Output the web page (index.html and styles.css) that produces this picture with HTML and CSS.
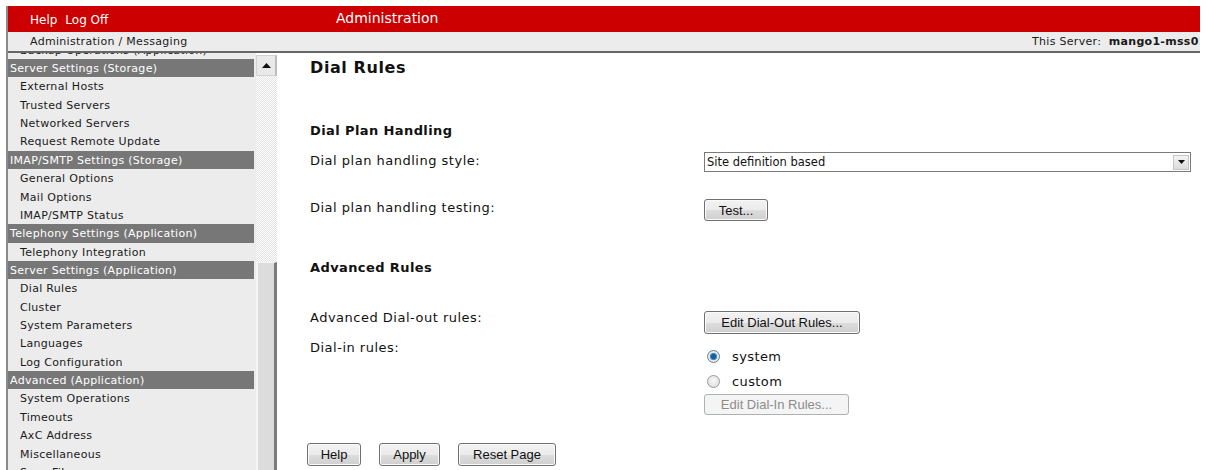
FILE: index.html
```html
<!DOCTYPE html>
<html lang="en">
<head>
<meta charset="utf-8">
<title>Administration - Dial Rules</title>
<link rel="stylesheet" href="styles.css">
</head>
<body>
<div class="frame">
  <header class="topbar">
    <nav class="toplinks"><a href="#">Help</a><a href="#">Log Off</a></nav>
    <div class="apptitle">Administration</div>
  </header>
  <div class="crumbbar">
    <span class="crumbs">Administration / Messaging</span>
    <span class="server">This Server:&nbsp; <b>mango1-mss01.corp.local</b></span>
  </div>
  <div class="body">
    <aside class="sidebar">
      <div class="navlist">
        <div class="nav-item">Backup Operations (Application)</div>
        <div class="nav-head">Server Settings (Storage)</div>
        <div class="nav-item">External Hosts</div>
        <div class="nav-item">Trusted Servers</div>
        <div class="nav-item">Networked Servers</div>
        <div class="nav-item">Request Remote Update</div>
        <div class="nav-head">IMAP/SMTP Settings (Storage)</div>
        <div class="nav-item">General Options</div>
        <div class="nav-item">Mail Options</div>
        <div class="nav-item">IMAP/SMTP Status</div>
        <div class="nav-head">Telephony Settings (Application)</div>
        <div class="nav-item">Telephony Integration</div>
        <div class="nav-head">Server Settings (Application)</div>
        <div class="nav-item">Dial Rules</div>
        <div class="nav-item">Cluster</div>
        <div class="nav-item">System Parameters</div>
        <div class="nav-item">Languages</div>
        <div class="nav-item">Log Configuration</div>
        <div class="nav-head">Advanced (Application)</div>
        <div class="nav-item">System Operations</div>
        <div class="nav-item">Timeouts</div>
        <div class="nav-item">AxC Address</div>
        <div class="nav-item">Miscellaneous</div>
        <div class="nav-item">Save Files</div>
      </div>
    </aside>
    <div class="scrollbar">
      <div class="sb-up">
        <svg width="9" height="5" viewBox="0 0 9 5"><path d="M0 5 L4.5 0 L9 5 Z" fill="#111"/></svg>
      </div>
      <div class="sb-track"></div>
      <div class="sb-thumb"></div>
    </div>
    <main class="content">
      <h1 class="page-title">Dial Rules</h1>

      <h2 class="section first">Dial Plan Handling</h2>
      <div class="form-row">
        <div class="form-label">Dial plan handling style:</div>
        <div class="select">
          <span class="select-value">Site definition based</span>
          <span class="select-arrow">
            <svg width="7" height="4" viewBox="0 0 7 4"><path d="M0 0 L7 0 L3.5 4 Z" fill="#111"/></svg>
          </span>
        </div>
      </div>
      <div class="form-row gap-test">
        <div class="form-label">Dial plan handling testing:</div>
        <button class="btn btn-test" type="button">Test...</button>
      </div>

      <h2 class="section second">Advanced Rules</h2>
      <div class="form-row">
        <div class="form-label">Advanced Dial-out rules:</div>
        <button class="btn btn-out" type="button">Edit Dial-Out Rules...</button>
      </div>
      <div class="form-row gap-in">
        <div class="form-label">Dial-in rules:</div>
        <div class="radio-group">
          <label class="radio"><span class="radio-dot checked"></span>system</label>
          <label class="radio"><span class="radio-dot"></span>custom</label>
          <button class="btn btn-in" type="button" disabled>Edit Dial-In Rules...</button>
        </div>
      </div>

      <div class="actions">
        <button class="btn btn-help" type="button">Help</button>
        <button class="btn btn-apply" type="button">Apply</button>
        <button class="btn btn-reset" type="button">Reset Page</button>
      </div>
    </main>
  </div>
</div>
</body>
</html>
```
FILE: styles.css
```css
html, body {
  margin: 0;
  padding: 0;
  background: #fff;
}

body {
  font-family: "DejaVu Sans", sans-serif;
  color: #111;
}

.frame {
  margin: 6px 6px 0 6px;
  border-left: 2px solid #8a8a8a;
  height: 464px;
  overflow: hidden;
}

/* red application bar */
.topbar {
  height: 26px;
  background: #cc0000;
  color: #fff;
  display: flex;
  align-items: center;
  padding-left: 22px;
}

.toplinks {
  width: 306px;
  display: flex;
  gap: 8px;
  font-size: 12px;
  padding-top: 2px;
}

.toplinks a {
  color: #fff;
  text-decoration: none;
}

.apptitle {
  font-size: 14px;
  padding-bottom: 2px;
}

/* breadcrumb strip */
.crumbbar {
  height: 19px;
  background: #ececec;
  border-bottom: 2px solid #666;
  display: flex;
  align-items: center;
  padding-left: 22px;
  font-size: 11px;
  letter-spacing: 0.3px;
  color: #1a1a1a;
}

.crumbs {
  flex: 1;
}

.server {
  width: 168px;
  white-space: nowrap;
  overflow: hidden;
}

.server b {
  font-weight: bold;
}

.body {
  display: flex;
  height: 417px;
}

/* navigation tree */
.sidebar {
  width: 248px;
  background: #ececec;
  overflow: hidden;
  flex-shrink: 0;
}

.navlist {
  margin-top: -12.36px;
}

.nav-head,
.nav-item {
  height: 18.36px;
  box-sizing: border-box;
  padding-top: 1px;
  line-height: 18px;
  font-size: 11px;
  letter-spacing: 0.3px;
  white-space: nowrap;
}

.nav-head {
  background: #777;
  color: #fff;
  padding-left: 2px;
  margin-right: 2px;
}

.nav-item {
  padding-left: 12px;
  color: #1a1a1a;
}

/* scroll bar beside the tree */
.scrollbar {
  width: 21px;
  flex-shrink: 0;
  display: flex;
  flex-direction: column;
}

.sb-up {
  margin-top: 2px;
  height: 19px;
  background: #e9e9e9;
  border: 1px solid #d2d2d2;
  border-right: 2px solid #bdbdbd;
  display: flex;
  align-items: center;
  justify-content: center;
  box-sizing: content-box;
}

.sb-track {
  height: 186px;
  background: repeating-conic-gradient(#e2e2e2 0 25%, #fff 0 50%) 0 0 / 2px 2px;
}

.sb-thumb {
  flex: 1;
  background: #dcdcdc;
  border-left: 2px solid #f6f6f6;
  border-right: 3px solid #7c7c7c;
  border-top: 1px solid #f6f6f6;
}

/* page body */
.content {
  flex: 1;
  padding: 6px 0 0 33px;
  font-size: 13px;
  letter-spacing: 0.5px;
  color: #111;
}

.page-title {
  margin: 0;
  font-size: 16px;
  letter-spacing: 0.6px;
  line-height: 18px;
  font-weight: bold;
}

.section {
  margin: 0;
  font-size: 13px;
  letter-spacing: 0.4px;
  line-height: 16px;
  font-weight: bold;
}

.section.first {
  margin-top: 46px;
  margin-bottom: 13px;
}

.section.second {
  margin-top: 39px;
  margin-bottom: 33px;
}

.form-row {
  display: flex;
  align-items: flex-start;
}

.form-label {
  width: 394px;
  flex-shrink: 0;
  line-height: 18px;
}

.gap-test {
  margin-top: 27px;
}

.gap-in {
  margin-top: 5px;
}

/* drop-down */
.select {
  width: 487px;
  height: 20px;
  box-sizing: border-box;
  border: 1px solid #7a7a7a;
  background: #fff;
  display: flex;
  align-items: center;
  justify-content: space-between;
  padding: 0 1px 0 2px;
  font-size: 11.5px;
  letter-spacing: 0;
}

.select-arrow {
  width: 16px;
  height: 15px;
  box-sizing: border-box;
  border: 1px solid #c4c4c4;
  background: linear-gradient(#f4f4f4, #dcdcdc);
  display: flex;
  align-items: center;
  justify-content: center;
}

/* push buttons */
.btn {
  font-family: "Liberation Sans", Arial, sans-serif;
  font-size: 13px;
  letter-spacing: 0;
  color: #111;
  height: 23px;
  padding: 0;
  border: 1px solid #707070;
  border-radius: 3px;
  background: linear-gradient(#f2f2f2 0%, #ebebeb 50%, #dddddd 51%, #cfcfcf 100%);
  box-shadow: inset 0 0 0 1px #fbfbfb;
  cursor: default;
}

.btn:disabled {
  color: #8c8c8c;
  border-color: #adb2b5;
  background: #f4f4f4;
  box-shadow: none;
}

.btn-test {
  width: 64px;
  height: 22px;
}

.btn-out {
  width: 156px;
  margin-top: 2px;
}

.btn-in {
  width: 145px;
  height: 21px;
}

.btn-help {
  width: 54px;
}

.btn-apply {
  width: 61px;
}

.btn-reset {
  width: 98px;
}

/* radio choices */
.radio-group {
  padding-top: 5px;
  display: flex;
  flex-direction: column;
  align-items: flex-start;
}

.radio {
  height: 25px;
  display: flex;
  align-items: center;
  gap: 12px;
  padding-left: 3px;
  font-size: 13px;
  letter-spacing: 0.4px;
}

.radio-dot {
  width: 13px;
  height: 13px;
  box-sizing: border-box;
  border-radius: 50%;
  border: 1px solid #9a9a9a;
  background: radial-gradient(circle at 50% 40%, #f8f8f8, #d8d8d8);
}

.radio-dot.checked {
  border-color: #6f7a84;
  background: radial-gradient(circle, #1d5d91 0 2.2px, #5aa6dc 3.5px, #dfe7ee 4px, #eef2f5 100%);
}

.actions {
  margin-top: 28px;
  margin-left: -3px;
  display: flex;
  gap: 18px;
}
```
